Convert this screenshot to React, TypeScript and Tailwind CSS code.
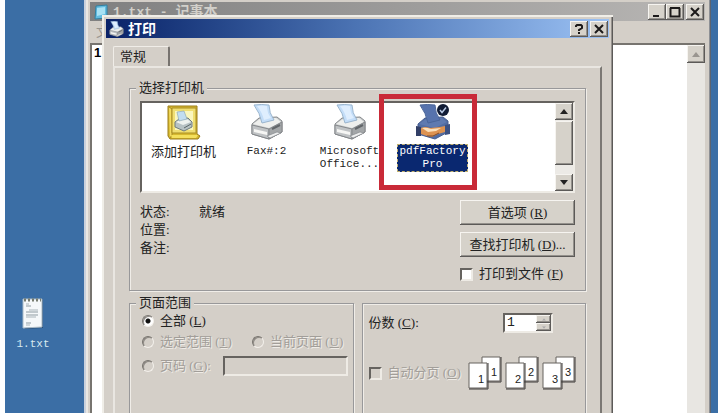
import { useState, type ReactNode } from "react";
import clsx from "clsx";

const RAISED =
  "bg-[#d6d2ca] shadow-[inset_-1px_-1px_#5c5a58,inset_1px_1px_#f6f4f0,inset_-2px_-2px_#94918c]";
const SUNKEN =
  "border-2 border-t-[#66635f] border-l-[#66635f] border-r-[#eeebe5] border-b-[#eeebe5]";
const ETCHED =
  "border border-[#98989a] shadow-[1px_1px_#f0ede8,inset_1px_1px_#f0ede8]";
const DISABLED = "text-[#a29e99] [text-shadow:1px_1px_#efece7]";

// Latin labels are half as wide as the Chinese ones
const MONO = "font-['Liberation_Mono',monospace] text-[11px]";

function Serif({ children }: { children: ReactNode }) {
  return <span className="font-['Liberation_Serif',serif]">{children}</span>;
}

function Key({ letter }: { letter: string }) {
  return (
    <Serif>
      {" "}
      (<u>{letter}</u>)
    </Serif>
  );
}

function Arrow({ down, className }: { down?: boolean; className?: string }) {
  return (
    <svg viewBox="0 0 8 5" className={clsx("h-[5px] w-2", className)} fill="currentColor">
      <path d={down ? "M0 0h8L4 5z" : "M0 5h8L4 0z"} />
    </svg>
  );
}

function CaptionButton({ label, children }: { label: string; children: ReactNode }) {
  return (
    <button
      type="button"
      aria-label={label}
      className={clsx("flex h-4 w-[18px] items-center justify-center text-[#1c1a1a]", RAISED)}
    >
      <svg viewBox="0 0 12 12" className="size-3" fill="none" stroke="currentColor" strokeWidth="2">
        {children}
      </svg>
    </button>
  );
}

function Printer({ blue, className }: { blue?: boolean; className?: string }) {
  const edge = blue ? "#465d90" : "#85888b";
  return (
    <svg viewBox="0 0 34 36" className={className} strokeLinejoin="round">
      <path d="M2 20 9 14 27 13 32 17V28L19 35 2 30z" fill={blue ? "#526da3" : "#c9cccd"} stroke={edge} />
      <path d="M3 20 10 15 26 14 31 18 19 24z" fill={blue ? "#5f7ab0" : "#eeefed"} />
      <path
        d="M4 1Q11 0 19 1Q19 9 24 16L12 19Q10 9 4 1z"
        fill={blue ? "#5773ad" : "#c3ddf8"}
        stroke={blue ? "#4a6599" : "#9ab5ce"}
      />
      {!blue && <path d="M7 2Q13 1 17 2Q17 9 21 14L14 16Q12 8 7 2z" fill="#dfeefe" />}
      {blue ? (
        <g>
          <path d="M0 22 5 23V32H0z" fill="#323f66" />
          <path d="M29 21 34 20V30L29 31z" fill="#3c5182" />
          <path d="M5 24Q9 22 14 24L24 23 29 22V28L22 30 16 33 11 32 5 30z" fill="#dd9250" />
          <path d="M6 24Q10 23 15 25L25 24 20 27 12 28z" fill="#fbe0bb" />
          <path d="M11 32 17 32 23 29" fill="none" stroke="#7d4a2c" />
        </g>
      ) : (
        <g>
          <path d="M2 21 19 25V35L2 30z" fill="#bfc2c4" stroke={edge} />
          <path d="M19 25 32 18V28L19 35z" fill="#a3a6a8" stroke={edge} />
          <path d="M4 25 17 28V31L4 28z" fill="#f6f6f4" />
          <path d="M17 32 27 28 31 29 20 34z" fill="#eeefef" stroke="#85888c" strokeWidth=".7" />
          <path d="M22 25 30 21" stroke="#616569" strokeWidth="2" />
        </g>
      )}
    </svg>
  );
}

function AddPrinter() {
  return (
    <svg viewBox="0 0 34 36" className="h-9 w-[34px]">
      <path d="M1 2H30V30L33 32 31 35H3L1 32z" fill="#d6b82f" stroke="#9a7c1a" />
      <path d="M2 3 5 5V31L3 34" fill="#f3db60" stroke="#a58a25" />
      <path d="M5 4H29V29H5z" fill="#f0df72" stroke="#aa8e24" />
      <path d="M8 7H26V26H8z" fill="#faf6be" />
      <path d="M4 31H31L29 34H5z" fill="#f4e05c" />
      <path d="M8 18 12 15 21 14 25 18V23L17 27 8 23z" fill="#b7c2c4" stroke="#6e7b7e" />
      <path d="M9 18 13 16 20 15 24 18 16 21z" fill="#eef2ef" />
      <path d="M10 8 17 7 20 15 12 17z" fill="#c2ddf1" stroke="#83a0ad" strokeWidth=".6" />
      <path d="M17 24 24 20" stroke="#5a6668" />
    </svg>
  );
}

const PRINTERS = [
  { name: "添加打印机", lines: ["添加打印机"], kind: "add" },
  { name: "Fax", lines: ["Fax#:2"], kind: "plain" },
  { name: "Microsoft Office", lines: ["Microsoft", "Office..."], kind: "plain" },
  { name: "pdfFactory Pro", lines: ["pdfFactory", "Pro"], kind: "pdf" },
];

const STATUS = [
  ["状态", "就绪"],
  ["位置", ""],
  ["备注", ""],
];

function PrinterList() {
  const [selected, setSelected] = useState("pdfFactory Pro");

  return (
    <div className={clsx("flex h-[92px] justify-between bg-white", SUNKEN)}>
      <div className="grid grid-cols-[repeat(4,83px)]">
        {PRINTERS.map((p) => (
          <button
            key={p.name}
            type="button"
            onClick={() => setSelected(p.name)}
            className="relative flex flex-col items-center pt-px"
          >
            {p.kind === "add" ? <AddPrinter /> : <Printer blue={p.kind === "pdf"} className="h-9 w-[34px]" />}
            {p.kind === "pdf" && (
              <svg viewBox="0 0 12 12" className="absolute top-px left-[46px] size-3">
                <circle cx="6" cy="6" r="6" fill="#101b34" />
                <path d="M3 6 5 8.500 9 3.500" fill="none" stroke="#b9cbe5" strokeWidth="1.500" />
              </svg>
            )}
            <span
              className={clsx(
                "mt-1 border border-dashed leading-[13px] whitespace-nowrap",
                p.kind !== "add" && MONO,
                selected === p.name
                  ? "border-[#c0b070] bg-[#0a2870] px-px text-white"
                  : "border-transparent text-[#222]"
              )}
            >
              {p.lines.map((line) => (
                <span key={line} className={clsx("block leading-[13px]", p.name === "Microsoft Office" && "text-left")}>
                  {line}
                </span>
              ))}
            </span>
            {p.kind === "pdf" && (
              <span className="pointer-events-none absolute -top-[9px] -right-[3px] -left-3 h-24 border-5 border-[#c92a38]" />
            )}
          </button>
        ))}
      </div>
      <div className="flex w-[18px] flex-col bg-[#eceae6]">
        <button type="button" aria-label="向上滚动" className={clsx("flex h-[17px] items-center justify-center", RAISED)}>
          <Arrow />
        </button>
        <div className={clsx("mt-px h-11", RAISED)} />
        <button
          type="button"
          aria-label="向下滚动"
          className={clsx("mt-auto flex h-[17px] items-center justify-center", RAISED)}
        >
          <Arrow down />
        </button>
      </div>
    </div>
  );
}

function Radio({
  label,
  letter,
  colon,
  disabled,
  defaultChecked,
}: {
  label: string;
  letter: string;
  colon?: boolean;
  disabled?: boolean;
  defaultChecked?: boolean;
}) {
  return (
    <label className={clsx("flex items-center gap-[6px] whitespace-nowrap", disabled && DISABLED)}>
      <input
        type="radio"
        name="range"
        disabled={disabled}
        defaultChecked={defaultChecked}
        className="size-3 shrink-0 appearance-none rounded-full border border-t-[#77736e] border-r-[#f3f0eb] border-b-[#f3f0eb] border-l-[#77736e] bg-white shadow-[inset_1px_1px_#8f8b86] checked:bg-[radial-gradient(#111_2px,#fff_3px)] disabled:bg-[#d4cfc8]"
      />
      <span>
        {label}
        <Key letter={letter} />
        {colon && <Serif>:</Serif>}
      </span>
    </label>
  );
}

function Check({ label, letter, disabled }: { label: string; letter: string; disabled?: boolean }) {
  return (
    <label className={clsx("flex items-center gap-[6px] whitespace-nowrap", disabled && DISABLED)}>
      <input
        type="checkbox"
        disabled={disabled}
        className={clsx("size-[13px] shrink-0 appearance-none bg-white checked:bg-[#444] disabled:bg-[#d4cfc8]", SUNKEN)}
      />
      <span>
        {label}
        <Key letter={letter} />
      </span>
    </label>
  );
}

function CollatePages() {
  return (
    <svg viewBox="0 0 109 34" className="h-[34px] w-[109px] shrink-0" aria-hidden="true">
      {[1, 2, 3].map((n, i) => (
        <g
          key={n}
          transform={`translate(${i * 37} 0)`}
          className="font-['Liberation_Sans',sans-serif] text-[11px]"
          stroke="#66635f"
        >
          <path d="M14 1H32V25H14z" fill="#fff" />
          <path d="M33 1V26H14" fill="none" stroke="#3c3a38" />
          <text x="23" y="20" fill="#222" stroke="none">
            {n}
          </text>
          <path d="M1 7H19V32H1z" fill="#fff" />
          <path d="M20 7V33H1" fill="none" stroke="#3c3a38" />
          <text x="10" y="27" fill="#222" stroke="none">
            {n}
          </text>
        </g>
      ))}
    </svg>
  );
}

function PrintDialog() {
  return (
    <section
      role="dialog"
      aria-label="打印"
      className="absolute top-[15px] right-[98px] -bottom-6 left-[18px] bg-[#d4cfc8] p-1 shadow-[inset_2px_2px_#f0eee8,inset_-1px_-1px_#5c5a58,inset_-2px_-2px_#96928e]"
    >
      <header className="flex h-[19px] items-center bg-linear-to-r from-[#0a2268] via-[#4c74b4] to-[#9cc2f4] pr-px pl-[3px]">
        <Printer className="h-4 w-[15px]" />
        <h1 className="ml-1 flex-1 text-[14px] leading-none font-bold text-white">打印</h1>
        <CaptionButton label="帮助">
          <path d="M3 4V3L4 2H8L9 3V5L6 7V8M6 9V11" />
        </CaptionButton>
        <div className="ml-[2px] flex">
          <CaptionButton label="关闭">
            <path d="M2 2 10 10M10 2 2 10" />
          </CaptionButton>
        </div>
      </header>

      <div className="px-[7px] pt-2">
        <div role="tablist">
          <button
            type="button"
            role="tab"
            aria-selected="true"
            className="block h-5 w-[57px] rounded-t-xs border-t border-r-2 border-l border-t-[#f0ede8] border-r-[#77736f] border-l-[#f0ede8] pr-4"
          >
            常规
          </button>
        </div>
        <div className="h-[380px] border-t-2 border-r-2 border-l-2 border-t-[#e9e6e1] border-r-[#7b7874] border-l-[#e9e6e1] px-[14px] pt-3">
          <fieldset className={clsx("px-[10px] pb-2", ETCHED)}>
            <legend className="-ml-1 bg-[#d4cfc8] px-[3px] leading-4">选择打印机</legend>
            <div className="pt-[5px]">
              <PrinterList />
            </div>
            <div className="flex justify-between pt-[7px]">
              <dl className="pt-[3px] leading-[18px]">
                {STATUS.map(([term, value]) => (
                  <div key={term} className="flex">
                    <dt className="w-[59px]">
                      {term}
                      <Serif>:</Serif>
                    </dt>
                    <dd>{value}</dd>
                  </div>
                ))}
              </dl>
              <div className="flex w-[115px] flex-col gap-[7px]">
                <button type="button" className={clsx("h-[25px]", RAISED)}>
                  首选项
                  <Key letter="R" />
                </button>
                <button type="button" className={clsx("h-[25px] whitespace-nowrap", RAISED)}>
                  查找打印机
                  <Key letter="D" />
                  <Serif>...</Serif>
                </button>
                <div className="pt-[2px]">
                  <Check label="打印到文件" letter="F" />
                </div>
              </div>
            </div>
          </fieldset>

          <div className="mt-1 grid h-40 grid-cols-2 gap-2">
            <fieldset className={clsx("min-w-0 pr-[5px] pl-3", ETCHED)}>
              <legend className="-ml-[6px] bg-[#d4cfc8] px-[3px] leading-4">页面范围</legend>
              <div className="flex h-5 items-center">
                <Radio label="全部" letter="L" defaultChecked />
              </div>
              <div className="mt-px flex h-5 items-center gap-5">
                <Radio label="选定范围" letter="T" disabled />
                <Radio label="当前页面" letter="U" disabled />
              </div>
              <div className="mt-1 flex h-5 items-center gap-3">
                <Radio label="页码" letter="G" colon disabled />
                <input aria-label="页码" disabled className={clsx("h-5 min-w-0 flex-1", SUNKEN)} />
              </div>
            </fieldset>

            <section aria-label="份数" className={clsx("mt-2 px-[6px] pt-[9px]", ETCHED)}>
              <div className="flex items-center justify-between pr-[26px]">
                <label htmlFor="copies">
                  份数
                  <Key letter="C" />
                  <Serif>:</Serif>
                </label>
                <div className={clsx("flex h-5 w-[50px] bg-white", SUNKEN)}>
                  <input
                    id="copies"
                    defaultValue="1"
                    className="w-[31px] pl-[2px] font-['Liberation_Mono',monospace] text-[13px] outline-none"
                  />
                  <div className="flex flex-1 flex-col">
                    <button type="button" aria-label="增加份数" className={clsx("flex flex-1 items-center justify-center text-[#aaa]", RAISED)}>
                      <Arrow className="scale-50" />
                    </button>
                    <button type="button" aria-label="减少份数" className={clsx("flex flex-1 items-center justify-center text-[#aaa]", RAISED)}>
                      <Arrow down className="scale-50" />
                    </button>
                  </div>
                </div>
              </div>
              <div className="flex items-center justify-between pt-[23px] pr-[2px]">
                <Check label="自动分页" letter="O" disabled />
                <CollatePages />
              </div>
            </section>
          </div>
        </div>
      </div>
    </section>
  );
}

function Notepad() {
  return (
    <main className="flex min-w-0 flex-1 flex-col bg-[#d4cfc8] px-[6px] pt-[2px] shadow-[inset_2px_0_#c8d0dc,inset_4px_0_#e9e7e3,inset_-1px_0_#5c6470,inset_-2px_0_#8d9095]">
      <header className="flex h-[19px] items-center bg-linear-to-r from-[#808080] to-[#b9b7b5] pr-px pl-1">
        <svg viewBox="0 0 14 16" className="h-4 w-[14px]">
          <path d="M2 2 13 1V14L1 15z" fill="#62bce0" stroke="#317f9f" />
          <path d="M3 4 11 3V10L3 12z" fill="#a7e1f3" />
        </svg>
        <h2 className="ml-[5px] flex-1 text-[14px] leading-none font-bold text-[#d2d0ca]">
          <span className="font-['Liberation_Mono',monospace] text-[13px]">1.txt - </span>
          记事本
        </h2>
        <CaptionButton label="最小化">
          <path d="M2 10H8" />
        </CaptionButton>
        <CaptionButton label="最大化">
          <path d="M1 2H11M1.500 2V10.500H10.500V2" />
        </CaptionButton>
        <div className="ml-[2px] flex">
          <CaptionButton label="关闭">
            <path d="M2 2 10 10M10 2 2 10" />
          </CaptionButton>
        </div>
      </header>
      <nav className="h-[22px] pl-[6px] leading-[22px] text-[#99958f]">文件</nav>
      <div className="flex flex-1 border-t-2 border-l-2 border-[#77746f] bg-white">
        <textarea
          aria-label="文本"
          defaultValue="1"
          className="flex-1 resize-none pl-[2px] font-['Liberation_Sans',sans-serif] text-[13px] leading-4 font-bold text-black outline-none"
        />
        <div className="w-[18px] bg-[#e8e6e2]">
          <button
            type="button"
            aria-label="向上滚动"
            disabled
            className={clsx("flex h-[18px] w-full items-center justify-center text-[#99958f]", RAISED)}
          >
            <Arrow />
          </button>
        </div>
      </div>
    </main>
  );
}

export default function App() {
  return (
    <div className="h-screen overflow-hidden bg-white pr-[2px] pl-[5px] font-['Liberation_Sans','Noto_Sans_CJK_SC',sans-serif] text-[13px] leading-4 text-[#222]">
      <div className="relative flex h-full bg-[#3b6ea5] pr-[7px] pl-[79px]">
        <button type="button" className="absolute top-[296px] left-0 flex w-14 flex-col items-center text-[#d7eaf0]">
          <svg viewBox="0 0 24 34" className="h-[34px] w-6">
            <path d="M3 4 22 3V32L4 33z" fill="#294f77" />
            <path d="M2 3H21V31L2 32z" fill="#f5f8fa" stroke="#a9bac7" />
            <path d="M3 4H20" stroke="#777c70" strokeWidth="3" strokeDasharray="2 2" />
            <path d="M5 10H10M5 16H17M5 19H17M5 27H10" stroke="#8d9aa1" />
            <path d="M5 8H8M8 14H17M5 21H15M5 29H9" stroke="#a9b4ba" />
          </svg>
          <span className={clsx("mt-[6px]", MONO)}>1.txt</span>
        </button>
        <div className="relative flex min-w-0 flex-1">
          <Notepad />
          <PrintDialog />
        </div>
      </div>
    </div>
  );
}
